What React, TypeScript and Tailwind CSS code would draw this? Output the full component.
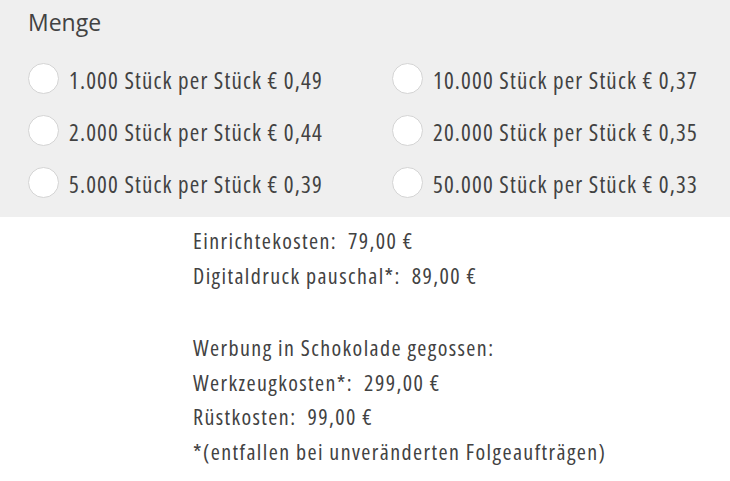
const options = [
  ["1.000 Stück per Stück € 0,49", "10.000 Stück per Stück € 0,37"],
  ["2.000 Stück per Stück € 0,44", "20.000 Stück per Stück € 0,35"],
  ["5.000 Stück per Stück € 0,39", "50.000 Stück per Stück € 0,33"],
];

function Radio({ label }: { label: string }) {
  return (
    <label className="flex items-start gap-[10px]">
      <span className="h-[31px] w-[31px] shrink-0 rounded-full border border-[#d4d4d4] bg-white" />
      <span className="whitespace-nowrap">{label}</span>
    </label>
  );
}

export default function App() {
  return (
    <div className="min-h-[481px] w-[730px] bg-white text-[#424242] [font-family:'Open_Sans',sans-serif]">
      <section className="h-[217px] bg-[#efefef] pl-[28px] pt-[7px]">
        <h2 className="text-[23px] leading-[30px]">Menge</h2>
        <div className="mt-[26px] grid grid-cols-[364px_1fr] gap-y-[17px] text-[23px] leading-[35px] tracking-[1.15px] [font-stretch:condensed]">
          {options.flat().map((o) => (
            <Radio key={o} label={o} />
          ))}
        </div>
      </section>
      <div className="pl-[193px] pt-[6px] text-[22px] leading-[34.5px] tracking-[1.4px] [font-stretch:condensed]">
        <p>Einrichtekosten:&nbsp; 79,00 €</p>
        <p>Digitaldruck pauschal*:&nbsp; 89,00 €</p>
        <p className="mt-[38px]">Werbung in Schokolade gegossen:</p>
        <p>Werkzeugkosten*:&nbsp; 299,00 €</p>
        <p>Rüstkosten:&nbsp; 99,00 €</p>
        <p>*(entfallen bei unveränderten Folgeaufträgen)</p>
      </div>
    </div>
  );
}
